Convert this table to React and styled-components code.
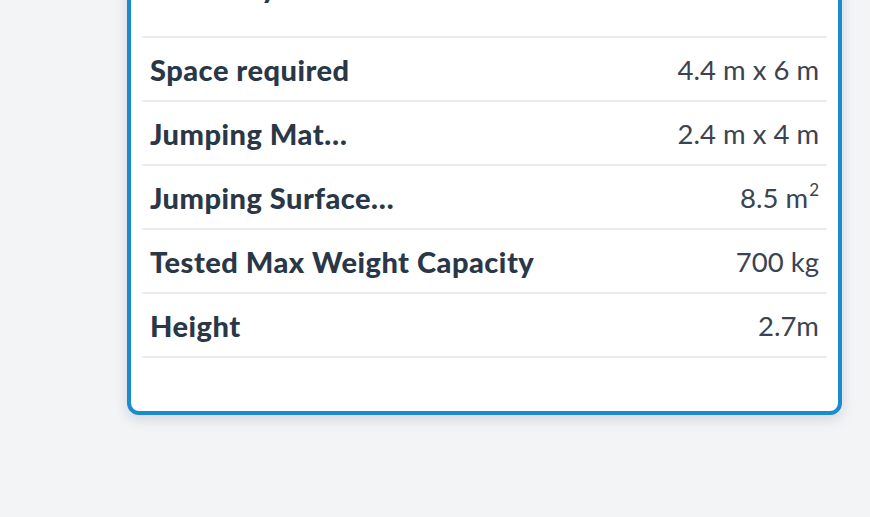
import React from 'react'
import styled, { createGlobalStyle } from 'styled-components'

const GlobalStyle = createGlobalStyle`
  html, body {
    margin: 0;
    padding: 0;
    background: #f2f4f6;
    font-family: 'Lato', 'Open Sans', sans-serif;
    overflow: hidden;
  }
`

const Page = styled.div`
  width: 870px;
  height: 517px;
  padding-left: 127px;
  box-sizing: border-box;
  overflow: hidden;
`

const Card = styled.div`
  width: 715px;
  margin-top: -60px;
  box-sizing: border-box;
  background: #fff;
  border: 4px solid #1b8bcf;
  border-radius: 12px;
  padding: 0 11px 53px;
  box-shadow: 0 4px 14px rgba(20, 30, 50, 0.14);
`

const Row = styled.div`
  display: flex;
  align-items: center;
  justify-content: space-between;
  height: 62px;
  padding: 0 8px;
  border-bottom: 2px solid #e9ecef;
`

const TopRow = styled(Row)`
  height: 94px;
  align-items: flex-start;
  padding-top: 25px;
  box-sizing: border-box;
`

const Label = styled.span`
  font-size: 29px;
  font-weight: 900;
  letter-spacing: 0.5px;
  color: #2a3747;
  white-space: nowrap;
`

const Value = styled.span`
  font-size: 27.5px;
  font-weight: 400;
  color: #3b4350;
  white-space: nowrap;
`

const Sup = styled.sup`
  font-size: 17px;
  line-height: 0;
  vertical-align: 12px;
  margin-left: 1px;
`

const specs = [
  { label: 'Space required', value: '4.4 m x 6 m' },
  { label: 'Jumping Mat…', value: '2.4 m x 4 m' },
  { label: 'Jumping Surface…', value: <>8.5 m<Sup>2</Sup></> },
  { label: 'Tested Max Weight Capacity', value: '700 kg' },
  { label: 'Height', value: '2.7m' },
]

export default function App() {
  return (
    <Page>
      <GlobalStyle />
      <Card>
        <TopRow>
          <Label>Warranty</Label>
        </TopRow>
        {specs.map(s => (
          <Row key={s.label}>
            <Label>{s.label}</Label>
            <Value>{s.value}</Value>
          </Row>
        ))}
      </Card>
    </Page>
  )
}
